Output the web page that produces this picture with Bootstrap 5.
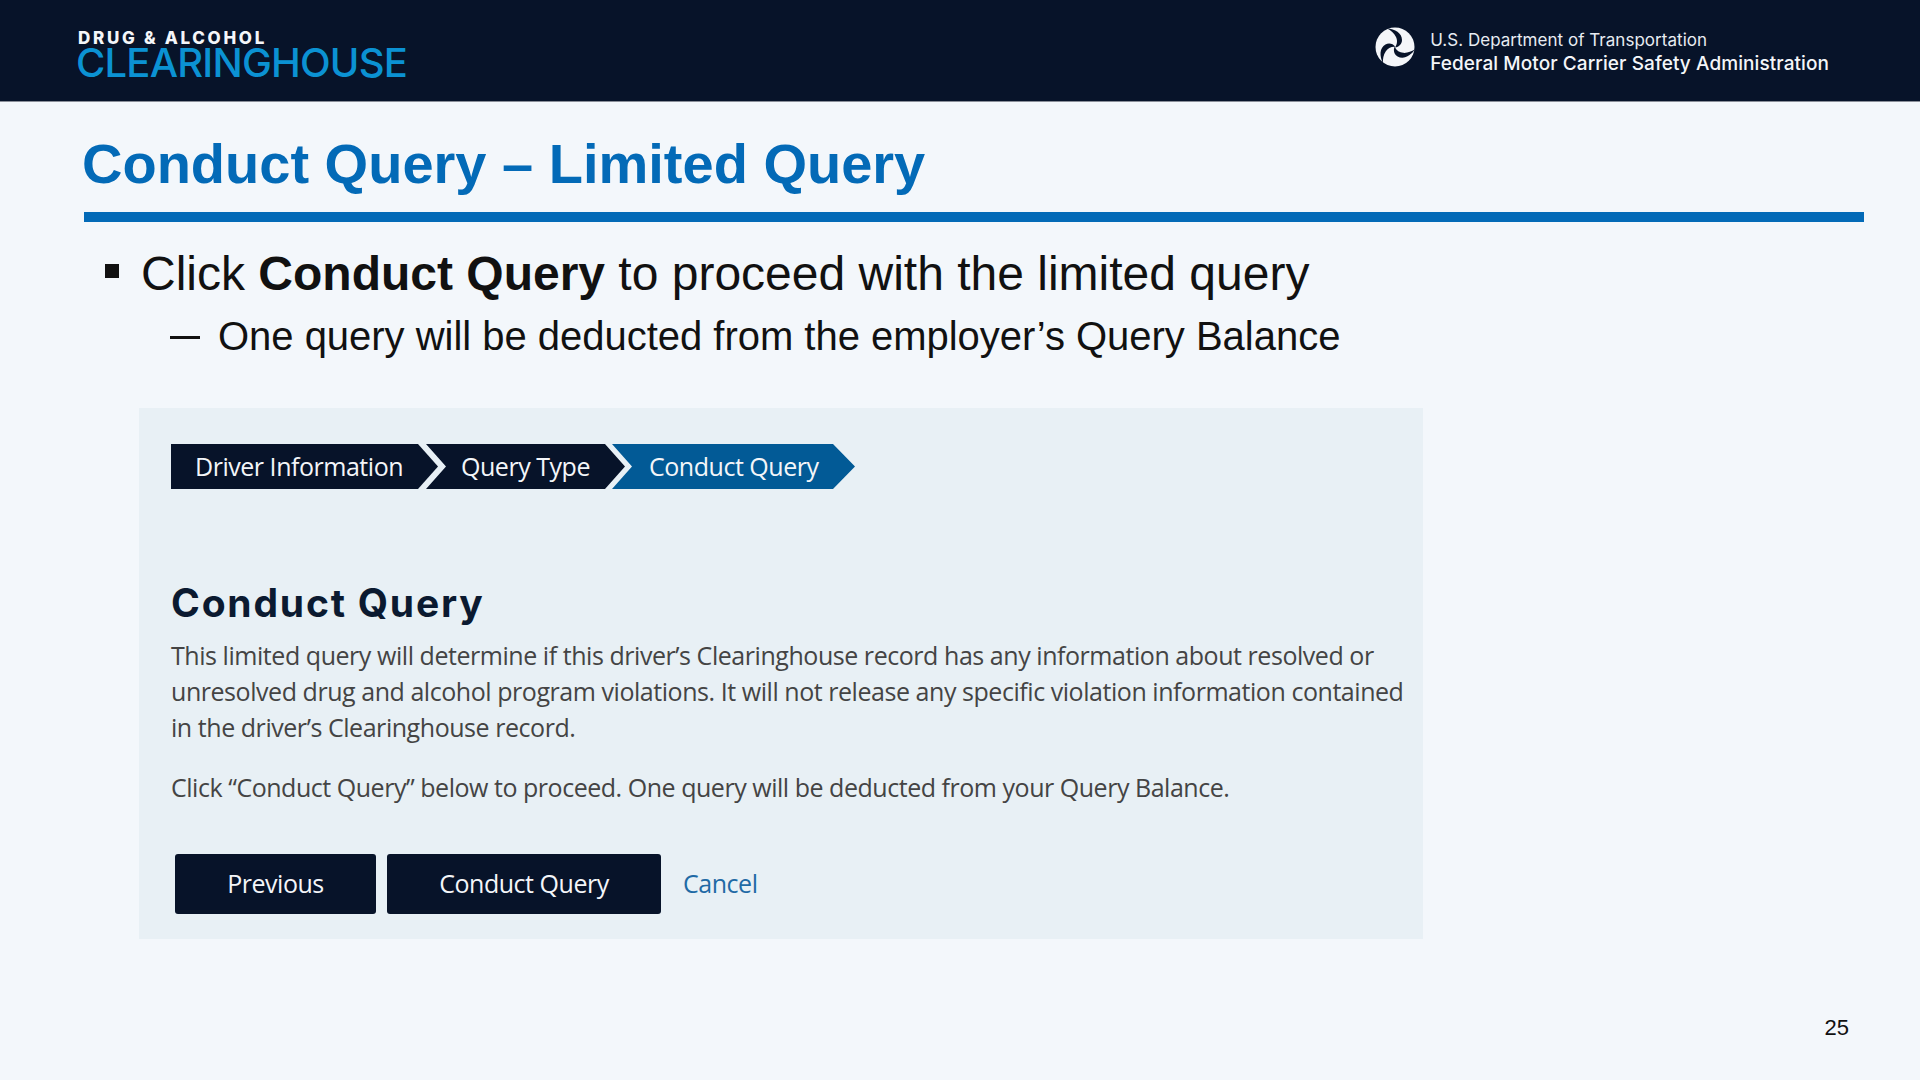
<!DOCTYPE html>
<html lang="en">
<head>
  <meta charset="UTF-8">
  <title>Conduct Query - Limited Query</title>
  <link href="https://cdn.jsdelivr.net/npm/bootstrap@5.3.2/dist/css/bootstrap.min.css" rel="stylesheet">
  <style>
    html, body { height: 1080px; overflow: hidden; }
    body { background: #f3f7fb; font-family: "Liberation Sans", Arial, sans-serif; color: #111; }
    .slide { height: 1080px; }
    .topbar { height: 102px; background: #071329; border-bottom: 1px solid #8a8f99; padding: 0 91px 0 76px; }
    .logo-wrap { padding-top: 10px; }
    .logo-top { font-family: Inter, sans-serif; font-weight: 800; font-size: 17px; letter-spacing: 2.7px; line-height: 15px; color: #f4f6f9; padding-left: 2px; }
    .logo-main { font-family: Inter, sans-serif; font-weight: 500; font-size: 40px; letter-spacing: -.8px; line-height: 34px; color: #0b92d3; }
    .dot-logo { margin-bottom: 8px; margin-right: -1px; }
    .dot-text { padding-top: 2px; }
    .dot-top { font-family: Inter, sans-serif; font-size: 17px; line-height: 24px; color: #e8ecf2; letter-spacing: .03px; }
    .dot-bottom { font-family: Inter, sans-serif; font-weight: 500; font-size: 19px; line-height: 24px; color: #f4f6f9; letter-spacing: .08px; }
    .slide-title { font-family: "Liberation Sans", sans-serif; font-weight: 700; font-size: 56px; line-height: 64px; color: #036ab7; margin: 0; }
    .title-wrap { padding: 30px 56px 0 82px; }
    .title-rule { height: 10px; background: #036ab7; margin: 16px 0 0 2px; }
    .points { padding: 25px 0 0 105px; }
    .point-one { font-size: 48px; line-height: 54px; }
    .point-one::before { content: ""; display: inline-block; width: 14px; height: 14px; background: #111; margin-right: 22px; vertical-align: 12px; }
    .point-two { font-size: 40px; line-height: 46px; margin: 12px 0 0 65px; letter-spacing: -.02px; }
    .point-two span { display: inline-block; width: 30px; height: 3px; background: #111; margin-right: 18px; vertical-align: 11px; }
    .shot { width: 1284px; height: 531px; margin: 49px 0 0 139px; background: #e8f0f5; padding: 36px 10px 0 32px; font-family: "Open Sans", sans-serif; color: #444; }
    .step { height: 45px; color: #f4f6f9; background: #071329; font-size: 25px; line-height: 45px; white-space: nowrap; letter-spacing: -.47px; }
    .step-a { width: 267px; padding-left: 24px; clip-path: polygon(0 0, 247px 0, 100% 50%, 247px 100%, 0 100%); }
    .step-b { width: 199px; margin-left: -12px; padding-left: 35px; clip-path: polygon(0 0, 179px 0, 100% 50%, 179px 100%, 0 100%, 20px 50%); }
    .step-c { width: 243px; margin-left: -13px; padding-left: 37px; background: #025a96; clip-path: polygon(0 0, 221px 0, 100% 50%, 221px 100%, 0 100%, 20px 50%); }
    .shot-title { font-family: Inter, sans-serif; font-weight: 700; font-size: 39px; line-height: 48px; letter-spacing: 1.8px; color: #0b1a30; margin: 90px 0 0 0; }
    .shot p { font-size: 25px; line-height: 36px; letter-spacing: -.47px; margin: 0; }
    .shot .shot-body { padding-top: 10px; letter-spacing: -.45px; }
    .shot .shot-note { margin-top: 24px; }
    .shot-actions { margin: 49px 0 0 4px; gap: 11px; }
    .shot-btn { background: #071329; color: #f4f6f9; font-size: 25px; letter-spacing: -.47px; height: 60px; border: 0; border-radius: 3px; padding: 0; }
    .shot-btn:hover { background: #071329; color: #f4f6f9; }
    .btn-prev { width: 201px; }
    .btn-run { width: 274px; }
    .cancel-link { color: #1f6aa5; font-size: 25px; letter-spacing: -.47px; text-decoration: none; margin-left: 11px; }
    .page-num { font-size: 22px; line-height: 26px; padding: 0 71px 39px 0; color: #111; }
  </style>
</head>
<body>
  <div class="slide d-flex flex-column">
    <header class="topbar d-flex justify-content-between align-items-center">
      <div class="logo-wrap">
        <div class="logo-top">DRUG &amp; ALCOHOL</div>
        <div class="logo-main">CLEARINGHOUSE</div>
      </div>
      <div class="d-flex align-items-center gap-3">
        <svg class="dot-logo" width="40" height="40" viewBox="0 0 40 40">
          <circle cx="20" cy="20" r="19.5" fill="#f4f6f9"/>
          <g fill="#071329">
            <path id="blade" d="M12 1.500C20 2 27 6 27 13C27 17 24 20 20 20.500C22.500 17 22.500 13 21 10C19 6 16 3.500 12 1.500Z"/>
            <use href="#blade" transform="rotate(120 20 20)"/>
            <use href="#blade" transform="rotate(240 20 20)"/>
          </g>
        </svg>
        <div class="dot-text">
          <div class="dot-top">U.S. Department of Transportation</div>
          <div class="dot-bottom">Federal Motor Carrier Safety Administration</div>
        </div>
      </div>
    </header>

    <div class="title-wrap">
      <h1 class="slide-title">Conduct Query – Limited Query</h1>
      <div class="title-rule"></div>
    </div>

    <div class="points">
      <div class="point-one">Click <b>Conduct Query</b> to proceed with the limited query</div>
      <div class="point-two"><span></span>One query will be deducted from the employer’s Query Balance</div>
    </div>

    <section class="shot">
      <div class="d-flex">
        <div class="step step-a">Driver Information</div>
        <div class="step step-b">Query Type</div>
        <div class="step step-c">Conduct Query</div>
      </div>
      <h2 class="shot-title">Conduct Query</h2>
      <p class="shot-body">This limited query will determine if this driver’s Clearinghouse record has any information about resolved or unresolved drug and alcohol program violations. It will not release any specific violation information contained in the driver’s Clearinghouse record.</p>
      <p class="shot-note">Click “Conduct Query” below to proceed. One query will be deducted from your Query Balance.</p>
      <div class="shot-actions d-flex align-items-center">
        <button type="button" class="btn shot-btn btn-prev">Previous</button>
        <button type="button" class="btn shot-btn btn-run">Conduct Query</button>
        <a href="#" class="cancel-link">Cancel</a>
      </div>
    </section>

    <div class="page-num mt-auto text-end">25</div>
  </div>
  <script src="https://cdn.jsdelivr.net/npm/bootstrap@5.3.2/dist/js/bootstrap.bundle.min.js"></script>
</body>
</html>
